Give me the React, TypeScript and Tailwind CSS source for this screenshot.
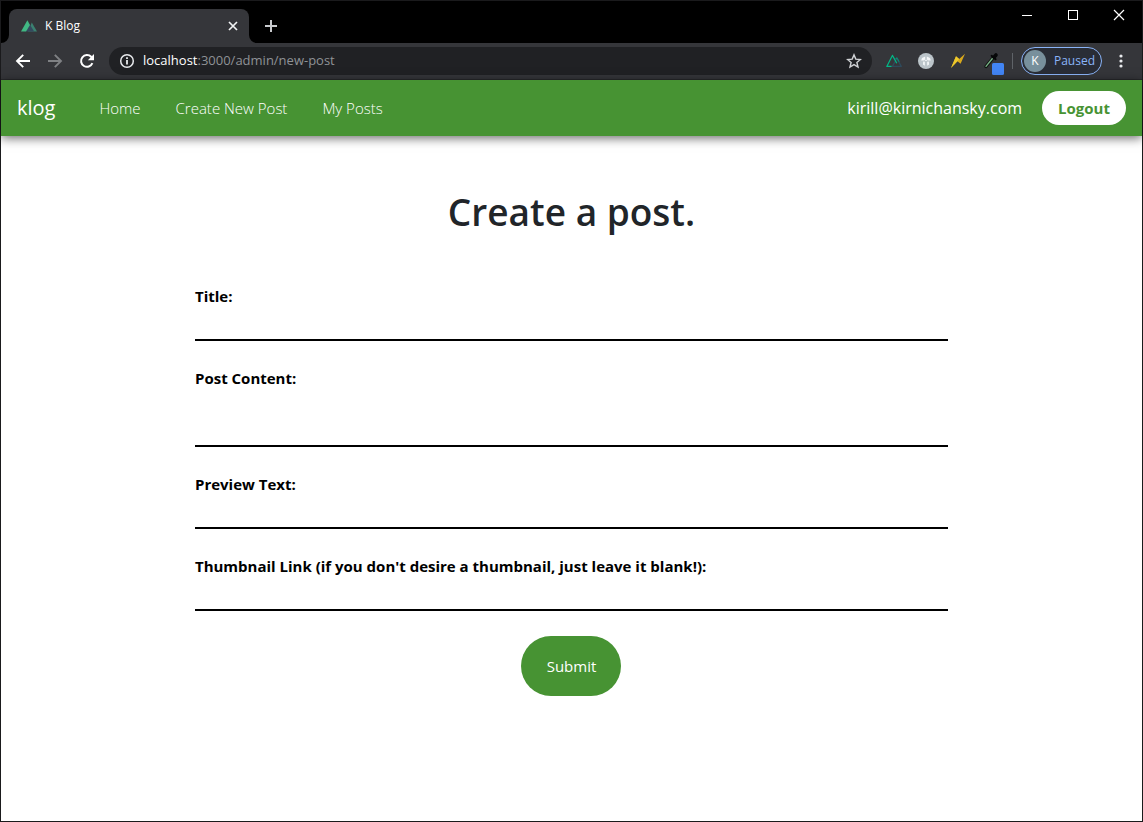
import type { ReactNode } from "react";

type FieldProps = { id: string; label: string; multiline?: boolean };

function Field({ id, label, multiline = false }: FieldProps) {
  return (
    <div className="flex flex-col">
      <label htmlFor={id} className="text-[15px] leading-6 font-bold text-black">
        {label}
      </label>
      {multiline ? (
        <textarea
          id={id}
          className="h-[57px] w-full resize-none border-b-2 border-black bg-transparent px-1 text-base outline-none"
        />
      ) : (
        <input
          id={id}
          type="text"
          className="h-[33px] w-full border-b-2 border-black bg-transparent px-1 text-base outline-none"
        />
      )}
    </div>
  );
}

function IconButton({ label, children }: { label: string; children: ReactNode }) {
  return (
    <button type="button" aria-label={label} className="flex size-4 shrink-0 items-center justify-center">
      {children}
    </button>
  );
}

function TabStrip() {
  return (
    <div className="flex h-[42px] items-end justify-between bg-black">
      <div className="flex items-end">
        <svg className="size-2" viewBox="0 0 8 8" aria-hidden="true">
          <path d="M8 0v8H0a8 8 0 0 0 8-8z" fill="#35363a" />
        </svg>
        <div className="flex h-[34px] w-60 items-center rounded-t-lg bg-[#35363a] pr-2 pl-3">
          <svg className="h-4 w-4 shrink-0" viewBox="0 0 16 16" aria-hidden="true">
            <path d="M7 13.5 10.8 4.6l5.2 8.9z" fill="#3b8070" />
            <path d="M4.5 13.5 8.8 6.5l4.4 7z" fill="#35495e" />
            <path d="M0 13.5 6.4 2.2 9 7 5 13.5z" fill="#41b883" />
          </svg>
          <span className="ml-2 grow text-xs text-white">K Blog</span>
          <IconButton label="Close tab">
            <svg className="size-4" viewBox="0 0 16 16" stroke="#f1f3f4" strokeWidth="1.7">
              <path d="m4 4 8 8M12 4l-8 8" />
            </svg>
          </IconButton>
        </div>
        <svg className="size-2" viewBox="0 0 8 8" aria-hidden="true">
          <path d="M0 0v8h8a8 8 0 0 1-8-8z" fill="#35363a" />
        </svg>
        <button type="button" aria-label="New tab" className="ml-1 flex h-[34px] w-5 items-center justify-center">
          <svg className="size-4" viewBox="0 0 16 16" stroke="#c8cacd" strokeWidth="2">
            <path d="M8 2v12M2 8h12" />
          </svg>
        </button>
      </div>
      <div className="flex h-full items-start">
        <button type="button" aria-label="Minimize" className="flex h-7 w-[46px] items-center justify-center">
          <svg className="size-3" viewBox="0 0 12 12" stroke="#fff" shapeRendering="crispEdges">
            <path d="M1 6.5h10" />
          </svg>
        </button>
        <button type="button" aria-label="Maximize" className="flex h-7 w-[46px] items-center justify-center">
          <svg className="size-3" viewBox="0 0 12 12" fill="none" stroke="#fff" shapeRendering="crispEdges">
            <path d="M1.5 1.5h9v9h-9z" />
          </svg>
        </button>
        <button type="button" aria-label="Close window" className="flex h-7 w-[46px] items-center justify-center">
          <svg className="size-3" viewBox="0 0 12 12" stroke="#fff" strokeWidth="1.2">
            <path d="m1 1 10 10M11 1 1 11" />
          </svg>
        </button>
      </div>
    </div>
  );
}

function Toolbar() {
  return (
    <div className="flex h-[37px] items-center border-b border-[#28292c] bg-[#35363a] pr-4 pl-[14px]">
      <div className="flex gap-4">
        <IconButton label="Back">
          <svg className="size-4" viewBox="0 0 16 16" fill="none" stroke="#fff" strokeWidth="1.9">
            <path d="M15 8H2.5M8.2 1.8 2 8l6.2 6.2" />
          </svg>
        </IconButton>
        <IconButton label="Forward">
          <svg className="size-4" viewBox="0 0 16 16" fill="none" stroke="#7f8184" strokeWidth="1.9">
            <path d="M1 8h12.5M7.8 1.8 14 8l-6.2 6.2" />
          </svg>
        </IconButton>
        <IconButton label="Reload">
          <svg className="size-4" viewBox="0 0 16 16" fill="none">
            <path d="M13.4 10.2A5.9 5.9 0 1 1 12.2 3.8L13.5 5" stroke="#fff" strokeWidth="2" />
            <path d="M15 1v6.2H8.8z" fill="#fff" />
          </svg>
        </IconButton>
      </div>
      <div className="ml-[14px] flex h-7 min-w-0 grow items-center rounded-full bg-[#202124] px-[10px]">
        <svg className="size-4 shrink-0" viewBox="0 0 16 16" aria-hidden="true">
          <circle cx="8" cy="8" r="6.3" fill="none" stroke="#e8eaed" strokeWidth="1.5" />
          <path d="M7.1 7.1h1.8v4.4H7.1zM7.1 4.3h1.8v1.7H7.1z" fill="#e8eaed" />
        </svg>
        <span className="ml-2 grow truncate text-[13px] text-[#8f9296]">
          <span className="text-white">localhost</span>:3000/admin/new-post
        </span>
        <IconButton label="Bookmark this page">
          <svg className="size-4" viewBox="0 0 16 16" fill="none" stroke="#d0d2d5" strokeWidth="1.4">
            <path d="m8 1.9 1.8 4.2 4.6.4-3.5 3 1.1 4.5-4-2.4L4 14l1.1-4.5-3.5-3 4.6-.4z" />
          </svg>
        </IconButton>
      </div>
      <div className="ml-[14px] flex items-center gap-4">
        <IconButton label="Nuxt devtools">
          <svg className="size-4" viewBox="0 0 16 16" fill="none" strokeWidth="1.2" strokeLinejoin="round">
            <path d="M6.4 13.4h8.9L10.8 5.4z" stroke="#2f4a5c" />
            <path d="M9.6 6.2 10.8 4.8l2.4 4" stroke="#108775" />
            <path d="M5.6 13.4H.8L6.4 2.4l4.4 7.8" stroke="#00b887" />
          </svg>
        </IconButton>
        <IconButton label="Globe extension">
          <svg className="size-4" viewBox="0 0 16 16">
            <circle cx="8" cy="8" r="8" fill="#bcc5ca" />
            <path
              d="M7.2 3.4v3L5.6 7.6H3.2l.8-2.6zM8.8 3.4v3l1.6 1.2h2.4L12 5zM5.2 8.6l1.6.2v4L5 11.6zM10.8 8.6l-1.6.2v4L11 11.6z"
              fill="#f6f8f9"
            />
            <path d="M6.8 7.4h2.4" stroke="#e9edef" strokeWidth="1.2" />
          </svg>
        </IconButton>
        <IconButton label="Lightning extension">
          <svg className="size-4" viewBox="0 0 16 16">
            <path d="M6 3.2 9.2 6 15 .8l-4.4 10L7.4 8.2 1 15z" fill="#d9a91c" />
            <path d="M6 3.2 9.2 6l-1.8 2.2L1 15z" fill="#edc92c" />
          </svg>
        </IconButton>
        <button type="button" aria-label="Colour picker" className="flex h-7 w-[22px] items-center">
          <svg className="h-7 w-[22px]" viewBox="0 0 22 28">
            <path d="M4 19.5 11 11" stroke="#101512" strokeWidth="3.4" strokeLinecap="round" />
            <path d="m4 19.3 6.4-7.8" stroke="#79b487" strokeWidth="1.3" strokeLinecap="round" />
            <path d="m9.6 8.8 4 3.4" stroke="#060708" strokeWidth="2" strokeLinecap="round" />
            <path d="m12 10.2 2-2.2" stroke="#060708" strokeWidth="3.6" strokeLinecap="round" />
            <rect x="10" y="16" width="12" height="12" rx="1.5" fill="#4285f4" />
          </svg>
        </button>
      </div>
      <div className="mx-2 h-4 w-px bg-[#5f6368]" />
      <button
        type="button"
        className="flex h-7 items-center rounded-full border border-[#8ab4f8] bg-[#292d36] pr-[6px] pl-[2px] text-xs text-[#8ab4f8]"
      >
        <span className="mr-2 flex size-[22px] items-center justify-center rounded-full bg-[#78909c] text-white">K</span>
        Paused
      </button>
      <button type="button" aria-label="Browser menu" className="ml-[14px] flex h-6 w-[10px] items-center justify-center">
        <svg className="h-4 w-1" viewBox="0 0 4 16" fill="#e8eaed">
          <circle cx="2" cy="3" r="1.6" />
          <circle cx="2" cy="8" r="1.6" />
          <circle cx="2" cy="13" r="1.6" />
        </svg>
      </button>
    </div>
  );
}

function NavBar() {
  return (
    <header className="flex h-14 items-center justify-between bg-[#479333] px-4 text-white shadow-[0_2px_10px_rgba(0,0,0,0.6)]">
      <div className="flex items-center">
        <a href="/" className="text-xl">
          klog
        </a>
        <nav className="ml-11 flex gap-[35px] text-[15px] font-light">
          <a href="/">Home</a>
          <a href="/admin/new-post">Create New Post</a>
          <a href="/admin/posts">My Posts</a>
        </nav>
      </div>
      <div className="flex items-center gap-5">
        <span className="text-base">kirill@kirnichansky.com</span>
        <button type="button" className="h-[34px] rounded-full bg-white px-4 text-[15px] font-bold text-[#479333]">
          Logout
        </button>
      </div>
    </header>
  );
}

export default function App() {
  return (
    <div className="flex min-h-screen flex-col border border-[#1a1a1c] bg-white font-['Segoe_UI','Open_Sans',sans-serif]">
      <TabStrip />
      <Toolbar />
      <NavBar />
      <main className="mx-auto flex w-[66%] grow flex-col pt-[52px]">
        <h1 className="text-center text-[37px] leading-[48px] font-semibold text-[#212529]">Create a post.</h1>
        <form className="mt-12 flex flex-col gap-[25px]" onSubmit={(event) => event.preventDefault()}>
          <Field id="title" label="Title:" />
          <Field id="content" label="Post Content:" multiline />
          <Field id="preview" label="Preview Text:" />
          <Field id="thumbnail" label="Thumbnail Link (if you don't desire a thumbnail, just leave it blank!):" />
          <button type="submit" className="h-[60px] w-[100px] self-center rounded-full bg-[#479333] text-[15px] text-white">
            Submit
          </button>
        </form>
      </main>
    </div>
  );
}
